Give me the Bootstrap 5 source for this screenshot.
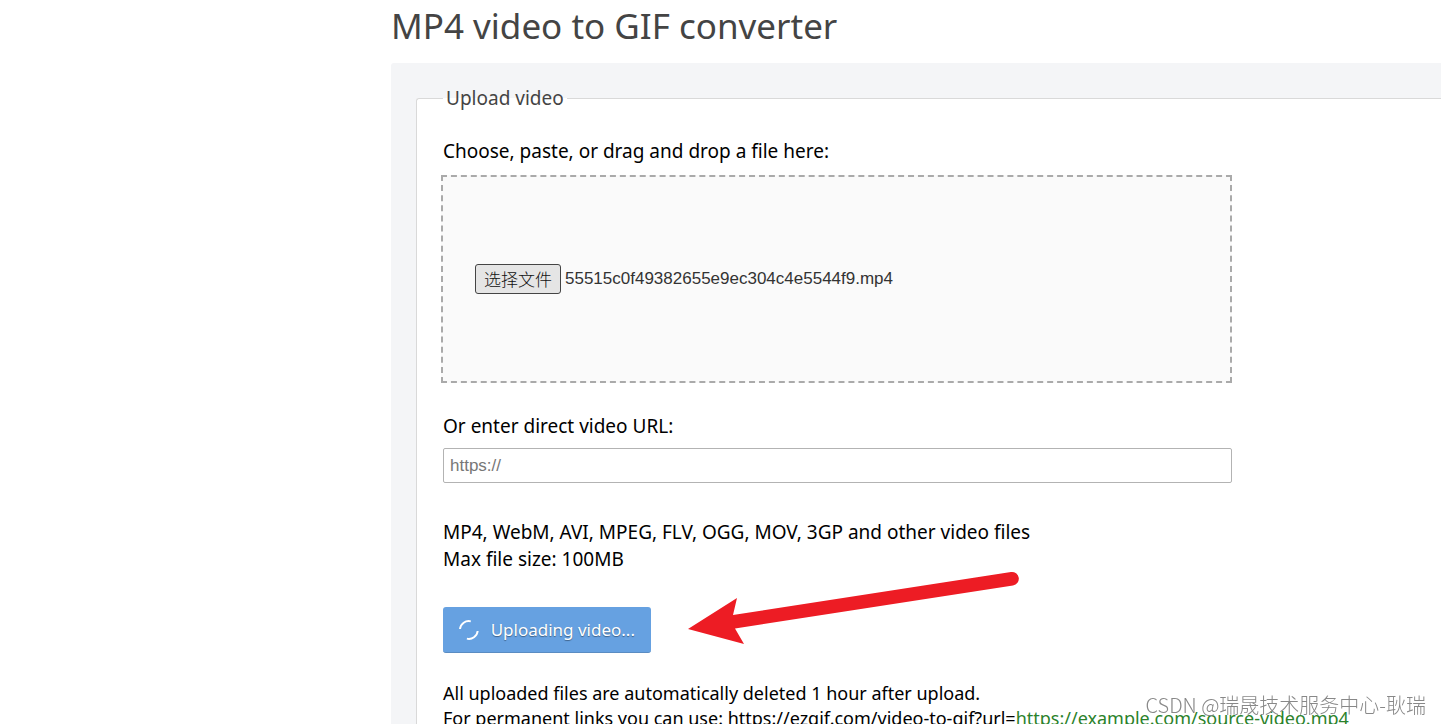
<!DOCTYPE html>
<html lang="en">
<head>
<meta charset="utf-8">
<meta name="viewport" content="width=device-width, initial-scale=1">
<title>MP4 video to GIF converter</title>
<link href="https://cdn.jsdelivr.net/npm/bootstrap@5.3.0/dist/css/bootstrap.min.css" rel="stylesheet">
<style>
  body { font-family: "Noto Sans", "Noto Sans CJK SC", sans-serif; font-size: 19px; line-height: 27px; color: #000; background: #fff; overflow: hidden; }
  .side-space { width: 391px; }
  .page-title { margin: 0 0 15px; font-size: 35px; line-height: 44px; font-weight: 400; color: #444; }
  .form-panel { background: #f4f5f7; padding: 22px 0 0 25px; border-radius: 3px 0 0 0; }
  .upload-box { border: 1px solid #d9d9d9; border-right: 0; border-radius: 3px 0 0 0; background: #fff; padding: 0 26px 24px; }
  .upload-box legend { float: none; width: auto; margin: 0; padding: 0 3px; font-size: 19px; line-height: 27px; color: #444; }
  .field-col { max-width: 789px; padding-top: 26px; }
  .drop-zone { height: 208px; margin: 10px 0 30px -2px; padding: 0 32px; border: 2px dashed #aaa; background: #fafafa; font: 17px "Liberation Sans", "Noto Sans CJK SC", sans-serif; color: #333; }
  .file-btn { height: 30px; padding: 0 8px; border: 1px solid #444; border-radius: 3px; background: #e5e5e5; color: #111; font: 300 17px/24px "Noto Sans CJK SC", sans-serif; }
  .url-input { height: 35px; margin: 8px 0 36px; padding: 0 6px; border: 1px solid #b3b3b3; border-radius: 2px; font: 17px "Liberation Sans", sans-serif; }
  .url-input::placeholder { color: #777; }
  .upload-btn { width: 208px; height: 46px; padding: 0 16px; border: 0; border-bottom: 1px solid #5a8cc2; border-radius: 3px; background: #66a1e1; color: #fff; font-size: 17px; text-shadow: 0 1px 1px rgba(0,0,0,.4); white-space: nowrap; }
  .upload-btn:hover { background: #5794d8; color: #fff; }
  .upload-row { margin: 34px 0 28px; }
  .pointer-arrow { left: 245px; top: -36px; }
  .help-text { font-size: 18px; line-height: 25px; }
  .help-text a { color: #2b822b; }
  .watermark { right: 15px; bottom: 5px; font: 20px/28px "Liberation Sans", "Noto Sans CJK SC", sans-serif; font-family: "Noto Sans CJK SC", sans-serif; font-weight: 300; color: #888; }
</style>
</head>
<body class="vh-100">
<div class="d-flex">
  <div class="side-space flex-shrink-0"></div>
  <main class="flex-grow-1">
    <h1 class="page-title pt-1">MP4 video to GIF converter</h1>
    <form class="form-panel" onsubmit="return false">
      <fieldset class="upload-box">
        <legend>Upload video</legend>
        <div class="field-col">
          <label for="file" class="d-block">Choose, paste, or drag and drop a file here:</label>
          <div class="drop-zone d-flex align-items-center">
            <input type="file" id="file" class="d-none" accept="video/*">
            <button type="button" class="file-btn" onclick="document.getElementById('file').click()">选择文件</button>
            <span class="ms-1">55515c0f49382655e9ec304c4e5544f9.mp4</span>
          </div>
          <label for="url" class="d-block">Or enter direct video URL:</label>
          <input type="url" id="url" class="url-input d-block w-100" placeholder="https://">
          <p class="m-0">MP4, WebM, AVI, MPEG, FLV, OGG, MOV, 3GP and other video files<br>Max file size: 100MB</p>
          <div class="upload-row position-relative">
            <button type="submit" class="upload-btn btn d-flex align-items-center">
              <svg width="20" height="20" viewBox="0 0 20 20" fill="none" stroke="#fff" stroke-width="2" aria-hidden="true"><path d="M1 9A9 9 0 0 1 12 1.2M19 11A9 9 0 0 1 8 18.8"/></svg>
              <span class="ms-2 ps-1">Uploading video...</span>
            </button>
            <svg class="pointer-arrow position-absolute" width="332" height="74" viewBox="0 0 332 74" fill="#ed1c24" aria-hidden="true"><path d="M0 58L49 27L45 44L323 1A6.6 6.6 0 0 1 325 14.500L47 57.500L56 73Z"/></svg>
          </div>
        </div>
        <p class="help-text m-0">All uploaded files are automatically deleted 1 hour after upload.<br>For permanent links you can use: https://ezgif.com/video-to-gif?url=<a href="#">https://example.com/source-video.mp4</a></p>
      </fieldset>
    </form>
  </main>
</div>
<div class="watermark position-fixed">CSDN @瑞晟技术服务中心-耿瑞</div>
<script src="https://cdn.jsdelivr.net/npm/bootstrap@5.3.0/dist/js/bootstrap.bundle.min.js"></script>
</body>
</html>
